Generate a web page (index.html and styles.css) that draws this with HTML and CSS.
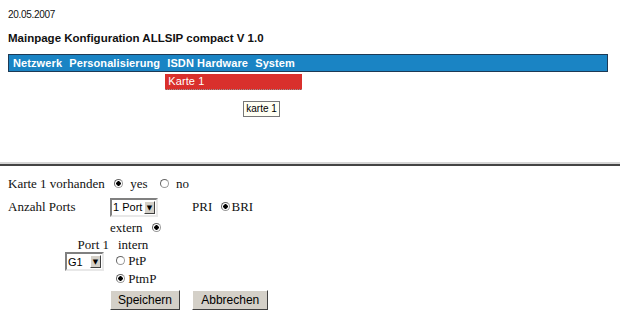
FILE: index.html
```html
<!DOCTYPE html>
<html>
<head>
    <title>Mainpage Konfiguration ALLSIP compact V 1.0</title>
    <link rel="stylesheet" href="styles.css">
</head>
<body>
    <div class="top">
        <p class="date">20.05.2007</p>
        <h1 class="title">Mainpage Konfiguration ALLSIP compact V 1.0</h1>

        <div class="menubar">
            <span class="menu-item">Netzwerk</span>
            <span class="menu-item">Personalisierung</span>
            <span class="menu-item has-sub">ISDN Hardware
                <span class="submenu">Karte 1</span>
                <span class="tooltip">karte 1</span>
            </span>
            <span class="menu-item">System</span>
        </div>
    </div>

    <div class="divider"></div>

    <form class="config">
        <div class="row">
            Karte 1 vorhanden
            <input type="radio" name="karte" checked> yes
            <input type="radio" name="karte" class="gap"> no
        </div>

        <table class="ports">
            <tr class="r-anzahl">
                <td class="lbl">Anzahl Ports</td>
                <td class="sel">
                    <span class="dropdown port-drop">
                        <select><option>1 Port</option><option>2 Ports</option></select>
                        <span class="arrow">&#9660;</span>
                    </span>
                </td>
                <td class="pri">PRI <input type="radio" name="typ" checked>BRI</td>
            </tr>
            <tr class="r-extern">
                <td></td>
                <td>extern <input type="radio" name="mode" checked></td>
                <td></td>
            </tr>
            <tr class="r-port">
                <td class="port-lbl">Port 1</td>
                <td class="intern">intern</td>
                <td></td>
            </tr>
            <tr>
                <td class="g-cell">
                    <span class="dropdown g-drop">
                        <select><option>G1</option><option>G2</option></select>
                        <span class="arrow">&#9660;</span>
                    </span>
                </td>
                <td>
                    <div class="opt"><input type="radio" name="ptp"> PtP</div>
                    <div class="opt"><input type="radio" name="ptp" checked> PtmP</div>
                </td>
                <td></td>
            </tr>
            <tr>
                <td></td>
                <td colspan="2" class="buttons">
                    <button type="button" class="btn btn-save">Speichern</button>
                    <button type="button" class="btn btn-cancel">Abbrechen</button>
                </td>
            </tr>
        </table>
    </form>
</body>
</html>
```

FILE: styles.css
```css
/* Seite */
body {
    margin: 0;
    font-family: "Liberation Serif", "Times New Roman", serif;
    font-size: 13px;
    color: #111;
    background: #fff;
}

.top {
    padding: 0 8px;
    font-family: "Liberation Sans", Arial, sans-serif;
}

.date {
    margin: 0;
    padding-top: 9px;
    font-size: 10px;
    letter-spacing: -0.3px;
}

.title {
    margin: 12px 0 0 0;
    font-size: 11.5px;
    font-weight: bold;
}

/* Menue */
.menubar {
    margin-top: 10px;
    height: 16px;
    background: #1a84c4;
    border: 1px solid #1d3a55;
    color: #fff;
    font-size: 11px;
    font-weight: bold;
    line-height: 16px;
    padding-left: 4px;
    width: 594px;
    letter-spacing: 0.1px;
}

.menu-item {
    margin-right: 4px;
}

.has-sub {
    position: relative;
}

.submenu {
    position: absolute;
    left: -2px;
    top: 17px;
    width: 134px;
    height: 15px;
    line-height: 15px;
    background: #d9302c;
    border-bottom: 1px dotted #999;
    font-weight: normal;
    padding-left: 3px;
    white-space: nowrap;
}

.tooltip {
    position: absolute;
    left: 76px;
    top: 44px;
    padding: 0 2px;
    background: #fffff4;
    border: 1px solid #777;
    color: #000;
    font-weight: normal;
    font-size: 10px;
    line-height: 14px;
    white-space: nowrap;
    letter-spacing: 0;
}

.divider {
    margin-top: 90px;
    height: 2px;
    background: #d6d6d6;
    border-bottom: 2px solid #444;
}

/* Formular */
.config {
    padding: 7px 8px 0 8px;
}

.row {
    height: 22px;
    line-height: 22px;
}

input[type="radio"] {
    appearance: none;
    -webkit-appearance: none;
    width: 9px;
    height: 9px;
    margin: 0 4px 0 6px;
    border: 1px solid #999;
    border-top-color: #666;
    border-left-color: #666;
    border-radius: 50%;
    background: #fff;
    vertical-align: 0;
}

input[type="radio"]:checked {
    background: radial-gradient(circle, #000 0 2px, #fff 2.5px);
}

.gap {
    margin-left: 9px !important;
}

.ports {
    border-collapse: collapse;
}

.ports td {
    padding: 0;
    vertical-align: middle;
}

.r-anzahl td {
    height: 24px;
}

.r-extern td {
    height: 18px;
}

.r-port td {
    height: 15px;
    line-height: 15px;
}

.lbl {
    width: 102px;
}

.sel {
    width: 82px;
}

.pri input[type="radio"] {
    margin-left: 6px;
    margin-right: 1px;
}

/* Auswahlfelder im alten Windows-Stil */
.dropdown {
    display: inline-flex;
    align-items: stretch;
    height: 19px;
    box-sizing: border-box;
    border: 2px solid;
    border-color: #808080 #e8e8e8 #e8e8e8 #808080;
    background: #fff;
    vertical-align: middle;
}

.dropdown select {
    appearance: none;
    -webkit-appearance: none;
    flex: 1;
    min-width: 0;
    border: 0;
    outline: 0;
    padding: 0 0 0 1px;
    margin: 0;
    background: #fff;
    font-family: "Liberation Sans", Arial, sans-serif;
    font-size: 11px;
    color: #000;
}

.dropdown .arrow {
    width: 11px;
    box-sizing: border-box;
    margin: 1px;
    background: #d4d0c8;
    border: 1px solid;
    border-color: #fff #404040 #404040 #fff;
    font-size: 7px;
    line-height: 13px;
    text-align: center;
    color: #000;
    font-family: "DejaVu Sans", sans-serif;
}

.port-drop {
    width: 48px;
}

.port-lbl {
    text-align: right;
    padding-right: 1px !important;
}

.intern {
    padding-left: 8px !important;
}

.g-cell {
    text-align: right;
    padding-right: 6px !important;
    vertical-align: top !important;
}

.g-drop {
    width: 39px;
    text-align: left;
}

.opt {
    height: 18px;
    line-height: 18px;
}

.opt input[type="radio"] {
    margin-right: 0;
}

.buttons {
    padding-top: 2px !important;
}

.btn {
    font-family: "Liberation Sans", Arial, sans-serif;
    font-size: 12px;
    height: 20px;
    padding: 0;
    background: #d4d0c8;
    border: 1px solid;
    border-color: #fff #404040 #404040 #fff;
    color: #000;
}

.btn-save {
    width: 70px;
}

.btn-cancel {
    width: 76px;
    margin-left: 9px;
}
```
